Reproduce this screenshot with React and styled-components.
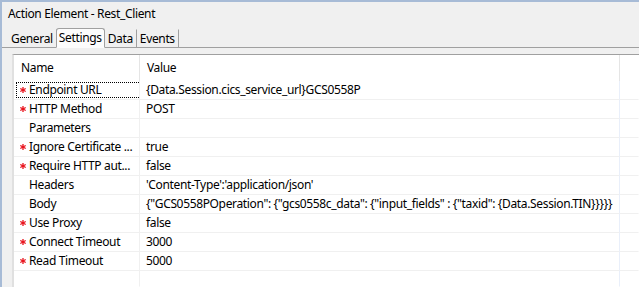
import React from 'react';
import styled, { createGlobalStyle } from 'styled-components';

const Global = createGlobalStyle`
  html, body { margin: 0; padding: 0; background: #f0f0f0; }
  body {
    font-family: "Noto Sans", "Open Sans", sans-serif;
    font-size: 12px;
    letter-spacing: -0.35px;
    color: #000;
  }
  #root { width: 639px; height: 287px; overflow: hidden; }
`;

const Window = styled.div`
  width: 639px;
  height: 287px;
  box-sizing: border-box;
  border-top: 2px solid #a7bbd6;
  border-left: 2px solid #a7bbd6;
  background: #f0f0f0;
  display: flex;
  flex-direction: column;
  overflow: hidden;
`;

const Title = styled.div`
  height: 25px;
  padding-left: 6px;
  line-height: 24px;
  white-space: nowrap;
`;

const TabBar = styled.div`
  display: flex;
  align-items: flex-end;
  height: 20px;
  padding-left: 6px;
  border-bottom: 1px solid #a0a0a0;
`;

const Tab = styled.div`
  box-sizing: border-box;
  height: ${p => (p.$active ? '20px' : '18px')};
  line-height: ${p => (p.$active ? '18px' : '17px')};
  padding: 0 ${p => (p.$active ? '2px' : '3px')} 0 2px;
  margin: ${p => (p.$active ? '0 0 -1px -1px' : '0')};
  background: ${p => (p.$active ? '#fcfcfc' : '#f0f0f0')};
  border: 1px solid ${p => (p.$active ? '#a0a0a0' : 'transparent')};
  border-right-color: #a0a0a0;
  border-bottom: ${p => (p.$active ? '1px solid #fcfcfc' : 'none')};
  border-radius: ${p => (p.$active ? '3px 3px 0 0' : '0')};
  white-space: nowrap;
  position: relative;
  z-index: ${p => (p.$active ? 1 : 0)};
`;

const Panel = styled.div`
  flex: 1;
  display: flex;
  flex-direction: column;
  padding: 6px 0 0 10px;
  min-height: 0;
`;

const TableBox = styled.div`
  flex: 1;
  background: #fff;
  border-top: 1px solid #a0a0a0;
  border-left: 2px solid #e0e0e0;
  overflow: hidden;
  min-height: 0;
`;

const Grid = styled.div`
  display: grid;
  height: 100%;
  grid-template-columns: 126px 480px 1fr;
  grid-template-rows: 26px repeat(10, 19px) 1fr;
`;

const HeadCell = styled.div`
  line-height: 26px;
  padding-left: 7px;
  border-right: 1px solid ${p => (p.$last ? 'transparent' : '#e5e5e5')};
  white-space: nowrap;
`;

const Row = styled.div`
  display: contents;
`;

const Cell = styled.div`
  position: relative;
  box-sizing: border-box;
  line-height: 18px;
  border-bottom: 1px solid ${p => (p.$filler ? 'transparent' : '#f0f0f0')};
  border-right: 1px solid ${p => p.$line || 'transparent'};
  padding-left: ${p => p.$pad || 0}px;
  white-space: nowrap;
  overflow: hidden;
`;

const Focus = styled.div`
  position: absolute;
  left: 2px;
  top: 1px;
  width: 603px;
  height: 16px;
  box-sizing: border-box;
  border: 1px dotted #000;
  pointer-events: none;
`;

const Star = styled.svg`
  position: absolute;
  left: 6px;
  top: 6px;
  width: 6px;
  height: 6px;
`;

const RequiredStar = () => (
  <Star viewBox="0 0 6 6">
    <g stroke="#e8101a" strokeWidth="1.3" strokeLinecap="square">
      <line x1="3" y1="0.6" x2="3" y2="5.4" />
      <line x1="0.8" y1="1.8" x2="5.2" y2="4.2" />
      <line x1="0.8" y1="4.2" x2="5.2" y2="1.8" />
    </g>
  </Star>
);

const rows = [
  ['Endpoint URL', '{Data.Session.cics_service_url}GCS0558P', true],
  ['HTTP Method', 'POST', true],
  ['Parameters', '', false],
  ['Ignore Certificate ...', 'true', true],
  ['Require HTTP aut...', 'false', true],
  ['Headers', "'Content-Type':'application/json'", false],
  ['Body', '{"GCS0558POperation": {"gcs0558c_data": {"input_fields" : {"taxid": {Data.Session.TIN}}}}}', false],
  ['Use Proxy', 'false', true],
  ['Connect Timeout', '3000', true],
  ['Read Timeout', '5000', true],
];

export default function App() {
  return (
    <>
      <Global />
      <Window>
        <Title>Action Element - Rest_Client</Title>
        <TabBar>
          <Tab>General</Tab>
          <Tab $active>Settings</Tab>
          <Tab>Data</Tab>
          <Tab>Events</Tab>
        </TabBar>
        <Panel>
          <TableBox>
            <Grid>
              <HeadCell>Name</HeadCell>
              <HeadCell>Value</HeadCell>
              <HeadCell $last />
              {rows.map(([name, value, req], i) => (
                <Row key={name}>
                  <Cell $pad={15} $line="#f0f0f0">
                    {req && <RequiredStar />}
                    {i === 0 && <Focus />}
                    {name}
                  </Cell>
                  <Cell $pad={6} $line="#e9effa">{value}</Cell>
                  <Cell />
                </Row>
              ))}
              <Row>
                <Cell $filler $line="#f0f0f0" />
                <Cell $filler $line="#e9effa" />
                <Cell $filler />
              </Row>
            </Grid>
          </TableBox>
        </Panel>
      </Window>
    </>
  );
}
